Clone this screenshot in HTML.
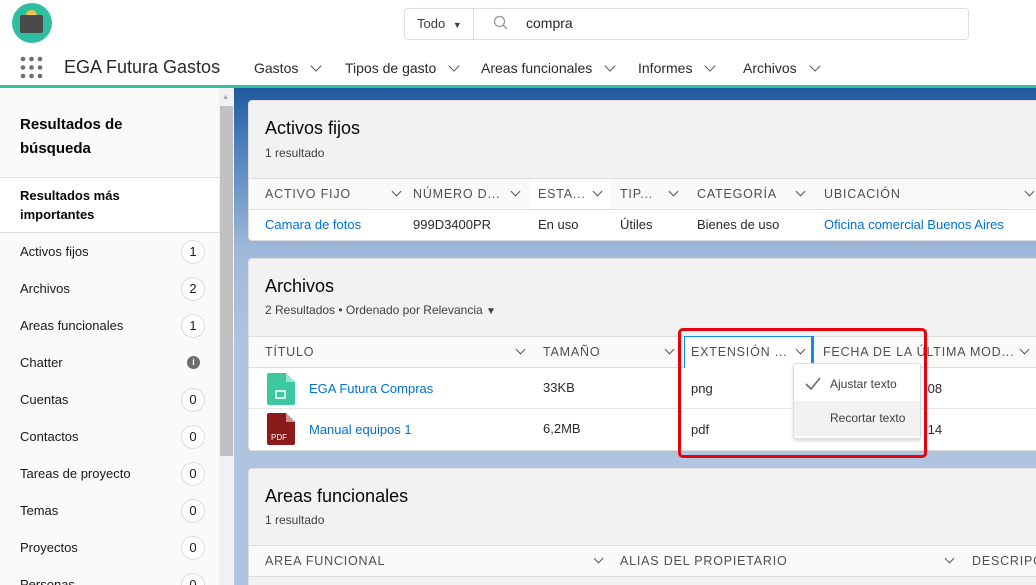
<!DOCTYPE html>
<html><head><meta charset="utf-8"><style>
*{box-sizing:border-box;margin:0;padding:0}
html,body{width:1036px;height:585px;overflow:hidden}
body{position:relative;font-family:"Liberation Sans",sans-serif;background:#fff;color:#080707}
.a{position:absolute;white-space:nowrap}
.nav{font-size:14px;color:#2b2826;top:60px}
.chev{display:inline-block;width:8px;height:8px;border-right:1.5px solid #555;border-bottom:1.5px solid #555;transform:rotate(45deg);}
.side{font-size:13px;color:#181818}
.badge{position:absolute;left:181px;width:24px;height:24px;border:1px solid #ddd;border-radius:50%;background:#fff;text-align:center;line-height:22px;font-size:13px;color:#181818}
.card{position:absolute;left:248px;width:800px;background:#f3f2f2;border-radius:4px;border:1px solid #ddd;overflow:hidden}
.h{font-size:18px;color:#080707}
.sub{font-size:12px;color:#3e3e3c}
.th{position:absolute;height:32px;background:#fafaf9;border-top:1px solid #ddd;border-bottom:1px solid #ddd;left:0;right:0}
.tr{position:absolute;background:#fff;left:0;right:0;border-bottom:1px solid #e5e5e5}
.thc{font-size:12.5px;letter-spacing:.8px;color:#514f4d;top:8px}
.td{font-size:13px;color:#2b2826}
.lk{color:#0070d2}
.cv{position:absolute;width:7px;height:7px;border-right:1.3px solid #555;border-bottom:1.3px solid #555;transform:rotate(45deg)}
</style></head><body>
<div class="a" style="left:12px;top:3px;width:40px;height:40px;border-radius:50%;background:#2fbfa0"></div>
<div class="a" style="left:26px;top:10px;width:11px;height:11px;border-radius:50%;background:#f5c342"></div>
<div class="a" style="left:20px;top:15px;width:23px;height:18px;border-radius:2px;background:#4a4a4a"></div>
<div class="a" style="left:404px;top:8px;width:565px;height:32px;border:1px solid #d8dde6;border-radius:4px"></div>
<div class="a" style="left:473px;top:8px;width:1px;height:32px;background:#d8dde6"></div>
<div class="a" style="left:417px;top:16px;font-size:13px;color:#3e3e3c">Todo <span style="font-size:9px;margin-left:4px">▼</span></div>
<svg class="a" style="left:493px;top:15px" width="16" height="16" viewBox="0 0 16 16"><circle cx="6.5" cy="6.5" r="5" fill="none" stroke="#999" stroke-width="1.3"/><line x1="10" y1="10" x2="14" y2="14" stroke="#999" stroke-width="1.3"/></svg>
<div class="a" style="left:526px;top:15px;font-size:14px;color:#2b2826">compra</div>
<svg class="a" style="left:20px;top:56px" width="23" height="23" viewBox="0 0 23 23" fill="#706e6b"><circle cx="3" cy="3" r="2.3"/><circle cx="11.5" cy="3" r="2.3"/><circle cx="20" cy="3" r="2.3"/><circle cx="3" cy="11.5" r="2.3"/><circle cx="11.5" cy="11.5" r="2.3"/><circle cx="20" cy="11.5" r="2.3"/><circle cx="3" cy="20" r="2.3"/><circle cx="11.5" cy="20" r="2.3"/><circle cx="20" cy="20" r="2.3"/></svg>
<div class="a" style="left:64px;top:57px;font-size:18px;color:#2b2826">EGA Futura Gastos</div>
<div class="a nav" style="left:254px">Gastos <span class="chev" style="margin:0 0 3px 10px"></span></div>
<div class="a nav" style="left:345px">Tipos de gasto <span class="chev" style="margin:0 0 3px 10px"></span></div>
<div class="a nav" style="left:481px">Areas funcionales <span class="chev" style="margin:0 0 3px 10px"></span></div>
<div class="a nav" style="left:638px">Informes <span class="chev" style="margin:0 0 3px 10px"></span></div>
<div class="a nav" style="left:743px">Archivos <span class="chev" style="margin:0 0 3px 10px"></span></div>
<div class="a" style="left:0;top:85px;width:1036px;height:3px;background:#2fbfa0"></div>
<div class="a" style="left:0;top:88px;width:219px;height:497px;background:#fafaf9"></div>
<div class="a" style="left:219px;top:88px;width:15px;height:497px;background:#f1f1f1"></div>
<div class="a" style="left:220px;top:106px;width:13px;height:350px;background:#c1c1c1"></div>
<div class="a" style="left:222px;top:94px;font-size:7px;color:#a3a3a3">▲</div>
<div class="a" style="left:20px;top:113px;font-size:15px;font-weight:bold;line-height:24px;color:#080707;white-space:normal;width:160px">Resultados de búsqueda</div>
<div class="a" style="left:0;top:177px;width:219px;height:56px;background:#fff;border-top:1px solid #ddd;border-bottom:1px solid #ddd"></div>
<div class="a" style="left:20px;top:186px;font-size:13px;font-weight:bold;line-height:19px;color:#080707;white-space:normal;width:160px">Resultados más importantes</div>
<div class="a side" style="left:20px;top:244px">Activos fijos</div><div class="badge" style="top:240px">1</div>
<div class="a side" style="left:20px;top:281px">Archivos</div><div class="badge" style="top:277px">2</div>
<div class="a side" style="left:20px;top:318px">Areas funcionales</div><div class="badge" style="top:314px">1</div>
<div class="a side" style="left:20px;top:355px">Chatter</div><div class="a" style="left:187px;top:356px;width:13px;height:13px;border-radius:50%;background:#706e6b;color:#fff;font-size:9px;text-align:center;line-height:13px;font-weight:bold">i</div>
<div class="a side" style="left:20px;top:392px">Cuentas</div><div class="badge" style="top:388px">0</div>
<div class="a side" style="left:20px;top:429px">Contactos</div><div class="badge" style="top:425px">0</div>
<div class="a side" style="left:20px;top:466px">Tareas de proyecto</div><div class="badge" style="top:462px">0</div>
<div class="a side" style="left:20px;top:503px">Temas</div><div class="badge" style="top:499px">0</div>
<div class="a side" style="left:20px;top:540px">Proyectos</div><div class="badge" style="top:536px">0</div>
<div class="a side" style="left:20px;top:577px">Personas</div><div class="badge" style="top:573px">0</div>
<div class="a" style="left:234px;top:88px;width:802px;height:497px;background:linear-gradient(#1f5a9e 0px,#4f82bd 60px,#9fb8d9 160px,#b0c4df 260px)"></div>
<div class="card" style="top:100px;height:141px">
<div class="a h" style="left:16px;top:17px">Activos fijos</div>
<div class="a sub" style="left:16px;top:45px">1 resultado</div>
<div class="th" style="top:77px">
<div class="a thc" style="left:16px">ACTIVO FIJO</div><div class="cv" style="left:144px;top:9px"></div>
<div class="a thc" style="left:164px">NÚMERO D...</div><div class="cv" style="left:263px;top:9px"></div>
<div class="a" style="left:281px;top:0;width:81px;height:30px;background:#fff"></div>
<div class="a thc" style="left:289px">ESTA...</div><div class="cv" style="left:345px;top:9px"></div>
<div class="a thc" style="left:371px">TIP...</div><div class="cv" style="left:421px;top:9px"></div>
<div class="a thc" style="left:448px">CATEGORÍA</div><div class="cv" style="left:548px;top:9px"></div>
<div class="a thc" style="left:575px">UBICACIÓN</div><div class="cv" style="left:777px;top:9px"></div>
</div>
<div class="tr" style="top:109px;height:31px">
<div class="a td lk" style="left:16px;top:7px">Camara de fotos</div>
<div class="a td" style="left:164px;top:7px">999D3400PR</div>
<div class="a td" style="left:289px;top:7px">En uso</div>
<div class="a td" style="left:371px;top:7px">Útiles</div>
<div class="a td" style="left:448px;top:7px">Bienes de uso</div>
<div class="a td lk" style="left:575px;top:7px">Oficina comercial Buenos Aires</div>
</div>
</div>
<div class="card" style="top:258px;height:193px">
<div class="a h" style="left:16px;top:17px">Archivos</div>
<div class="a sub" style="left:16px;top:44px">2 Resultados • Ordenado por Relevancia <span style="font-size:10px">▼</span></div>
<div class="th" style="top:77px">
<div class="a thc" style="left:16px">TÍTULO</div><div class="cv" style="left:268px;top:9px"></div>
<div class="a thc" style="left:294px">TAMAÑO</div><div class="cv" style="left:417px;top:9px"></div>
<div class="a" style="left:435px;top:-1px;width:130px;height:33px;background:#fff;border:1px solid #1589ee;border-right:3px solid #1589ee"></div>
<div class="a thc" style="left:442px">EXTENSIÓN ...</div><div class="cv" style="left:548px;top:9px"></div>
<div class="a thc" style="left:574px">FECHA DE LA ÚLTIMA MOD...</div><div class="cv" style="left:772px;top:9px"></div>
</div>
<div class="tr" style="top:109px;height:41px">
<svg class="a" style="left:18px;top:5px" width="28" height="32" viewBox="0 0 28 32"><path d="M0 2Q0 0 2 0H19L28 9V30Q28 32 26 32H2Q0 32 0 30Z" fill="#3dc8a0"/><path d="M19 0V9H28Z" fill="#9de3cf"/><rect x="9" y="18" width="9" height="7" fill="none" stroke="#fff" stroke-width="1.5"/></svg>
<div class="a td lk" style="left:60px;top:13px">EGA Futura Compras</div>
<div class="a td" style="left:294px;top:12px">33KB</div>
<div class="a td" style="left:442px;top:13px">png</div>
<div class="a td" style="left:675px;top:13px">:08</div>
</div>
<div class="tr" style="top:150px;height:42px;border-bottom:none">
<svg class="a" style="left:18px;top:4px" width="28" height="32" viewBox="0 0 28 32"><path d="M0 2Q0 0 2 0H19L28 9V30Q28 32 26 32H2Q0 32 0 30Z" fill="#8b1a1a"/><path d="M19 0V9H28Z" fill="#d09090"/><text x="4" y="27" font-size="8" fill="#fff" font-family="Liberation Sans">PDF</text></svg>
<div class="a td lk" style="left:60px;top:13px">Manual equipos 1</div>
<div class="a td" style="left:294px;top:12px">6,2MB</div>
<div class="a td" style="left:442px;top:13px">pdf</div>
<div class="a td" style="left:675px;top:13px">:14</div>
</div>
</div>
<div class="a" style="left:793px;top:363px;width:128px;height:76px;background:#fff;border:1px solid #ddd;border-radius:3px;box-shadow:0 2px 3px rgba(0,0,0,.15)"></div>
<div class="a" style="left:794px;top:401px;width:126px;height:35px;background:#f3f2f2"></div>
<svg class="a" style="left:805px;top:377px" width="16" height="14" viewBox="0 0 16 14"><path d="M1 7L6 12L15 1" fill="none" stroke="#706e6b" stroke-width="1.6"/></svg>
<div class="a" style="left:830px;top:377px;font-size:12px;color:#3e3e3c">Ajustar texto</div>
<div class="a" style="left:830px;top:411px;font-size:12px;color:#3e3e3c">Recortar texto</div>
<div class="a" style="left:678px;top:328px;width:249px;height:130px;border:3px solid #e8000b;border-radius:5px"></div>
<div class="card" style="top:468px;height:140px">
<div class="a h" style="left:16px;top:17px">Areas funcionales</div>
<div class="a sub" style="left:16px;top:44px">1 resultado</div>
<div class="th" style="top:76px">
<div class="a thc" style="left:16px">AREA FUNCIONAL</div><div class="cv" style="left:346px;top:9px"></div>
<div class="a thc" style="left:371px">ALIAS DEL PROPIETARIO</div><div class="cv" style="left:697px;top:9px"></div>
<div class="a thc" style="left:723px">DESCRIPCIÓN</div>
</div>
</div>
</body></html>
